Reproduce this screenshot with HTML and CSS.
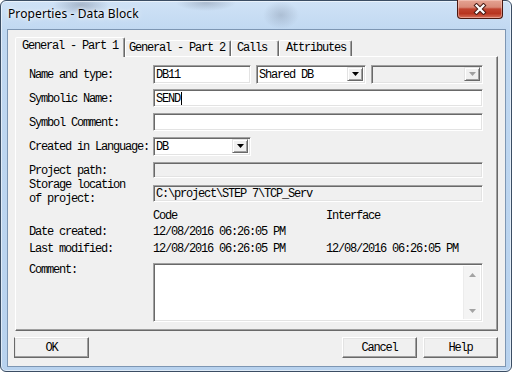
FILE: index.html
```html
<!DOCTYPE html>
<html>
<head>
<meta charset="utf-8">
<link rel="stylesheet" href="styles.css">
</head>
<body>
<div class="window">
  <div class="titlebar"><span class="title">Properties - Data Block</span></div>
  <div class="close">
    <svg width="14" height="12" viewBox="0 0 14 12"><path d="M3.5 2.5l7 7M10.5 2.5l-7 7" stroke="#4a1c16" stroke-width="4.2" stroke-linecap="square"/><path d="M3.5 2.5l7 7M10.5 2.5l-7 7" stroke="#fff" stroke-width="2.2" stroke-linecap="square"/></svg>
  </div>
  <div class="client">
    <div class="tabs">
      <div class="tab active t1">General - Part 1</div>
      <div class="tab t2">General - Part 2</div>
      <div class="tab t3">Calls</div>
      <div class="tab t4">Attributes</div>
    </div>
    <div class="panel">
      <div class="row r1">
        <span class="label">Name and type:</span>
        <div class="edit e-db"><span class="txt">DB11</span></div>
        <div class="combo c-shared"><span class="val">Shared DB</span><span class="dd"><svg width="7" height="4" viewBox="0 0 7 4"><path d="M0 0h7L3.5 4z" fill="#000"/></svg></span></div>
        <div class="combo disabled c-dis"><span class="val"></span><span class="dd"><svg width="7" height="4" viewBox="0 0 7 4"><path d="M0 0h7L3.5 4z" fill="#a0a0a0"/></svg></span></div>
      </div>
      <div class="row r2">
        <span class="label">Symbolic Name:</span>
        <div class="edit grow"><span class="txt">SEND</span><span class="caret"></span></div>
      </div>
      <div class="row r3">
        <span class="label">Symbol Comment:</span>
        <div class="edit grow"></div>
      </div>
      <div class="row r4">
        <span class="label">Created in Language:</span>
        <div class="combo c-lang"><span class="val">DB</span><span class="dd"><svg width="7" height="4" viewBox="0 0 7 4"><path d="M0 0h7L3.5 4z" fill="#000"/></svg></span></div>
      </div>
      <div class="row r5">
        <span class="label">Project path:</span>
        <div class="edit grow disabled"></div>
      </div>
      <div class="row r6">
        <span class="label two"><span class="ln">Storage location</span><span class="ln">of project:</span></span>
        <div class="edit grow disabled e-store"><span class="txt">C:\project\STEP 7\TCP_Serv</span></div>
      </div>
      <div class="row info r7">
        <span class="label"></span>
        <span class="col">Code</span>
        <span class="col">Interface</span>
      </div>
      <div class="row info r8">
        <span class="label">Date created:</span>
        <span class="col">12/08/2016 06:26:05 PM</span>
        <span class="col"></span>
      </div>
      <div class="row info r9">
        <span class="label">Last modified:</span>
        <span class="col">12/08/2016 06:26:05 PM</span>
        <span class="col">12/08/2016 06:26:05 PM</span>
      </div>
      <div class="row r10">
        <span class="label top">Comment:</span>
        <div class="edit grow memo">
          <div class="scroll">
            <span class="arrow"><svg width="7" height="4" viewBox="0 0 7 4"><path d="M3.5 0L7 4H0z" fill="#a3a3a3"/></svg></span>
            <span class="arrow"><svg width="7" height="4" viewBox="0 0 7 4"><path d="M0 0h7L3.5 4z" fill="#a3a3a3"/></svg></span>
          </div>
        </div>
      </div>
    </div>
    <div class="buttons">
      <div class="btn ok">OK</div>
      <div class="btn cancel">Cancel</div>
      <div class="btn">Help</div>
    </div>
  </div>
</div>
</body>
</html>
```
FILE: styles.css
```css
* { box-sizing: border-box; }
html, body { margin: 0; padding: 0; }
body {
  width: 512px;
  height: 372px;
  overflow: hidden;
  background: #ffffff;
  font-family: "Liberation Mono", "DejaVu Sans Mono", monospace;
  font-size: 12px;
  line-height: 12px;
  letter-spacing: -1.2px;
  color: #000;
}
.window {
  position: relative;
  width: 512px;
  height: 372px;
  border: 1px solid #3b4d63;
  border-radius: 6px;
  padding: 0 5px 4px 6px;
  display: flex;
  flex-direction: column;
  background:
    radial-gradient(ellipse 28px 10px at 80px 4px, rgba(90,100,120,0.35), rgba(90,100,120,0) 100%),
    radial-gradient(ellipse 30px 8px at 205px 2px, rgba(90,100,120,0.30), rgba(90,100,120,0) 100%),
    radial-gradient(ellipse 18px 14px at 280px 14px, rgba(90,100,120,0.25), rgba(90,100,120,0) 100%),
    linear-gradient(to bottom, #cfe2f6 0px, #c0d8f1 30px, #b8d2ee 100%);
  box-shadow: inset 0 0 0 1px rgba(255,255,255,0.55);
}
.titlebar {
  height: 28px;
  display: flex;
  align-items: center;
  padding: 0 0 2px 1px;
}
.title {
  font-family: "Noto Sans", "Open Sans", sans-serif;
  font-size: 12px;
  letter-spacing: 0.1px;
  color: #000;
  text-shadow: 0 0 6px rgba(255,255,255,0.9), 0 0 3px rgba(255,255,255,0.9);
}
.close {
  position: absolute;
  left: 456px;
  top: -1px;
  width: 46px;
  height: 19px;
  border: 1px solid #4b1810;
  border-top: none;
  border-radius: 0 0 4px 4px;
  background: linear-gradient(to bottom, #e5a393 0%, #d98a78 40%, #c0432f 50%, #b8341f 75%, #d6705a 100%);
  box-shadow: inset 0 0 0 1px rgba(255,220,210,0.45);
  display: flex;
  align-items: center;
  justify-content: center;
}
.client {
  flex: 1;
  border: 1px solid #7d96b3;
  background: #f0f0f0;
  padding: 7px 7px 0 7px;
  display: flex;
  flex-direction: column;
}
.tabs {
  display: flex;
  align-items: flex-end;
  height: 19px;
}
.tab {
  height: 16px;
  border: 1px solid;
  border-bottom: none;
  border-color: #fff #696969 transparent #fff;
  box-shadow: inset -1px 0 0 #a0a0a0;
  border-radius: 2px 2px 0 0;
  padding-top: 1px;
  white-space: nowrap;
  background: #f0f0f0;
}
.tab.active {
  height: 20px;
  margin-bottom: -1px;
  position: relative;
  z-index: 1;
  padding-top: 2px;
}
.t1 { width: 110px; padding-left: 6px; }
.t2 { width: 106px; padding-left: 3px; }
.t3 { width: 48px; padding-left: 5px; }
.t4 { width: 73px; padding-left: 6px; }
.panel {
  height: 275px;
  border: 1px solid;
  border-color: #fff #696969 #696969 #fff;
  box-shadow: inset -1px -1px 0 #a0a0a0;
  padding: 8px 14px 0 13px;
  display: flex;
  flex-direction: column;
}
.row {
  display: flex;
  align-items: center;
}
.label {
  width: 124px;
  flex: none;
  white-space: nowrap;
  padding-top: 1px;
}
.label.two {
  align-self: flex-start;
  padding-top: 0;
  display: flex;
  flex-direction: column;
  margin-top: -1px;
}
.label.two .ln { display: block; height: 14px; line-height: 14px; }
.label.top { align-self: flex-start; padding-top: 1px; }
.r1 { height: 19px; }
.r2 { height: 18px; margin-top: 5px; }
.r3 { height: 18px; margin-top: 6px; }
.r4 { height: 19px; margin-top: 6px; }
.r5 { height: 16px; margin-top: 6px; }
.r6 { height: 24px; margin-top: 1px; align-items: flex-start; }
.r7 { height: 12px; margin-top: 6px; }
.r8 { height: 12px; margin-top: 4px; }
.r9 { height: 12px; margin-top: 5px; }
.r10 { height: 59px; margin-top: 9px; align-items: stretch; }
.col { width: 173px; flex: none; white-space: nowrap; padding-top: 1px; }
.edit {
  height: 100%;
  border: 1px solid;
  border-color: #a0a0a0 #fff #fff #a0a0a0;
  box-shadow: inset 1px 1px 0 #696969, inset -1px -1px 0 #e3e3e3;
  background: #fff;
  display: flex;
  align-items: center;
  padding-left: 2px;
  padding-top: 1px;
  white-space: nowrap;
}
.edit.grow { flex: 1; }
.edit.disabled { background: #f0f0f0; }
.e-db { width: 98px; flex: none; }
.e-store { height: 17px; margin-top: 6px; }
.caret {
  display: inline-block;
  width: 1px;
  height: 13px;
  background: #000;
  margin-left: 1px;
  margin-top: -1px;
}
.combo {
  height: 100%;
  border: 1px solid;
  border-color: #a0a0a0 #fff #fff #a0a0a0;
  box-shadow: inset 1px 1px 0 #696969, inset -1px -1px 0 #e3e3e3;
  background: #fff;
  display: flex;
  padding: 1px 2px 2px 1px;
  flex: none;
}
.combo .val {
  flex: 1;
  display: flex;
  align-items: center;
  padding-left: 1px;
  padding-top: 1px;
  white-space: nowrap;
}
.combo .dd {
  width: 16px;
  flex: none;
  border: 1px solid;
  border-color: #e3e3e3 #696969 #696969 #e3e3e3;
  box-shadow: inset 1px 1px 0 #fff, inset -1px -1px 0 #a0a0a0;
  background: #f0f0f0;
  display: flex;
  align-items: center;
  justify-content: center;
}
.combo.disabled { background: #f0f0f0; }
.c-shared { width: 110px; margin-left: 5px; }
.c-dis { width: 112px; margin-left: 5px; }
.c-lang { width: 98px; }
.memo {
  padding: 2px 2px 2px 2px;
  justify-content: flex-end;
  align-items: stretch;
}
.scroll {
  width: 17px;
  background: #f4f4f4;
  border-left: 1px solid #ececec;
  display: flex;
  flex-direction: column;
  justify-content: space-between;
}
.arrow {
  height: 17px;
  display: flex;
  align-items: center;
  justify-content: center;
}
.buttons {
  display: flex;
  gap: 6px;
  margin-top: 6px;
}
.btn {
  width: 75px;
  height: 21px;
  border: 1px solid;
  border-color: #fff #696969 #696969 #fff;
  box-shadow: inset -1px -1px 0 #a0a0a0, inset 1px 1px 0 #e3e3e3;
  background: #f0f0f0;
  display: flex;
  align-items: center;
  justify-content: center;
  padding-top: 1px;
}
.btn.ok { margin-left: -1px; border-left-color: #696969; }
.btn.cancel { margin-left: auto; }
```
